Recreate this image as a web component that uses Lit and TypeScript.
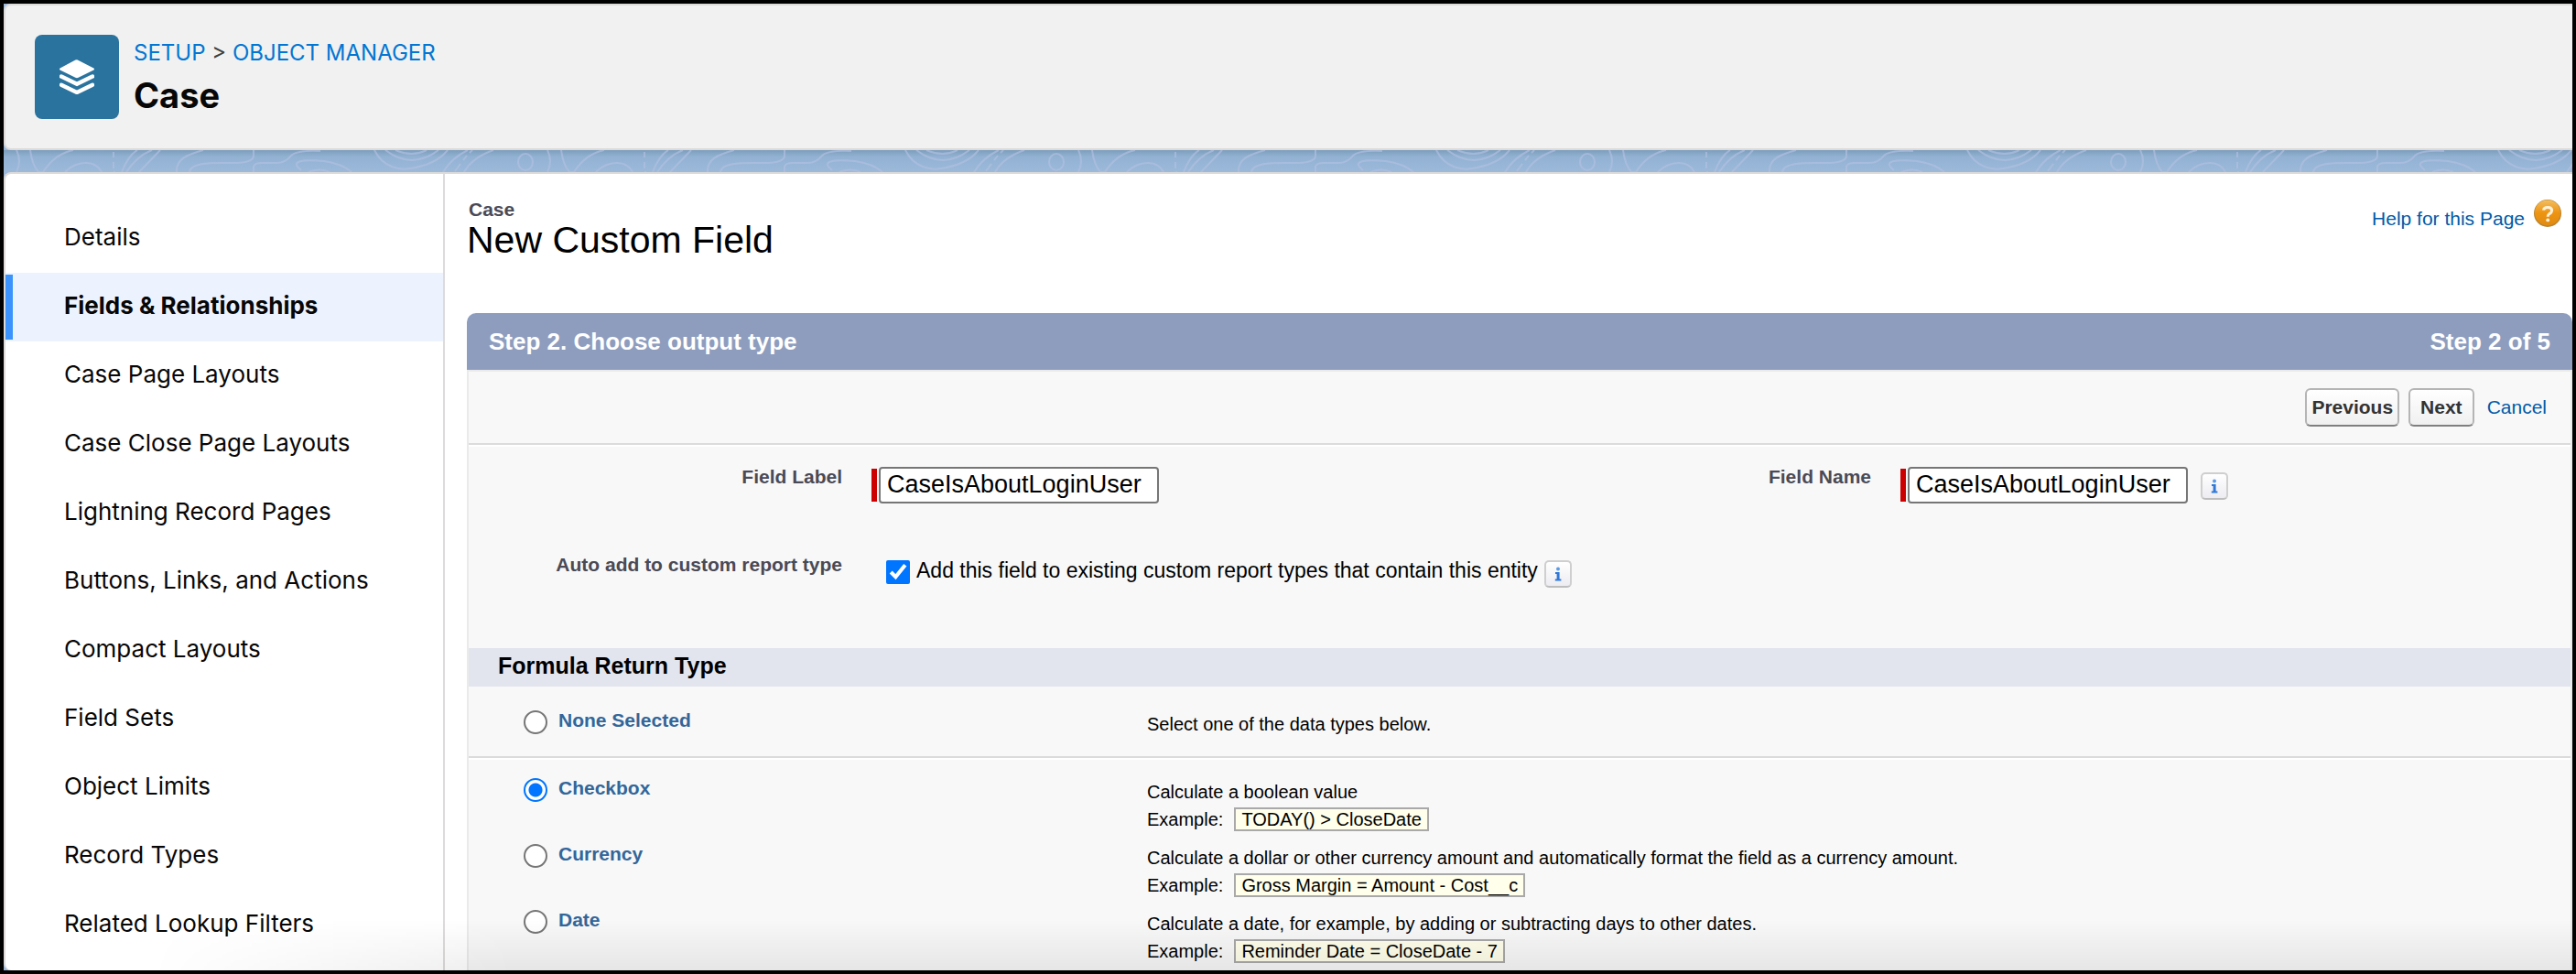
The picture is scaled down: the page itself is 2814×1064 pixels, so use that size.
import { LitElement, html, css, svg, nothing } from "lit";
import { customElement, property, state } from "lit/decorators.js";
import { classMap } from "lit/directives/class-map.js";

const SECTIONS = [
  "Details",
  "Fields & Relationships",
  "Case Page Layouts",
  "Case Close Page Layouts",
  "Lightning Record Pages",
  "Buttons, Links, and Actions",
  "Compact Layouts",
  "Field Sets",
  "Object Limits",
  "Record Types",
  "Related Lookup Filters",
];

interface ReturnType {
  id: string;
  label: string;
  text: string;
  example?: string;
}

const NONE: ReturnType = { id: "none", label: "None Selected", text: "Select one of the data types below." };

const TYPES: ReturnType[] = [
  { id: "checkbox", label: "Checkbox", text: "Calculate a boolean value", example: "TODAY() > CloseDate" },
  {
    id: "currency",
    label: "Currency",
    text: "Calculate a dollar or other currency amount and automatically format the field as a currency amount.",
    example: "Gross Margin = Amount - Cost__c",
  },
  {
    id: "date",
    label: "Date",
    text: "Calculate a date, for example, by adding or subtracting days to other dates.",
    example: "Reminder Date = CloseDate - 7",
  },
];

const layersIcon = svg`
  <path d="M19.8 .4 L37.4 9.4 Q38.6 10.4 37.4 11.4 L20.6 19.8 Q19 20.5 17.4 19.8 L.6 11.4 Q-.6 10.4 .6 9.4 L17.4 .6 Q19 -.2 19.8 .4 Z" fill="#fff"/>
  <path d="M2 19.5 L19 27.8 L36 19.5 M2 28.7 L19 37 L36 28.7" transform="translate(0 -1)" fill="none" stroke="#fff" stroke-width="4.4" stroke-linecap="round"/>`;

/* Contour-line texture shown between the header and the page body. */
@customElement("contour-strip")
export class ContourStrip extends LitElement {
  static styles = css`
    :host {
      display: block;
      height: 24px;
      background: linear-gradient(#7d9dbd, #93b2d3 30%, #9cb9da);
    }
    .lines {
      display: block;
      width: 100%;
      height: 100%;
    }
  `;

  render() {
    return html`<svg class="lines" aria-hidden="true">
      <defs>
        <pattern id="contours" width="580" height="24" patternUnits="userSpaceOnUse">
          <g fill="none" stroke="#b3c0e2" stroke-width="2" stroke-opacity=".65">
            <path d="M14 0 Q20 12 14 24" />
            <path d="M29 0 Q31 16 38 24 H43 Q56 4 76 0" />
            <path d="M67 24 Q77 14 90 14 Q102 14 107 24" />
            <path d="M120 2 V8 M120 13 V20 M121 23 V24" />
            <path d="M129 24 Q136 6 146 0 M134 24 Q146 6 162 0 M148 24 L171 0" />
            <path d="M189 24 C188 10 200 5 218 0" />
            <path d="M203 24 C204 14 225 14 240 14 L256 14 Q273 13 273 6 V0" />
            <path d="M273 24 V18 Q274 14 282 14 L298 14 Q308 14 314 6 Q320 0 346 1" />
            <path d="M325 22 C312 12 325 10 350 12 Q370 15 380 24 M333 24 Q345 19 356 24" />
            <path d="M405 0 C415 20 434 22 444 20 Q472 16 485 0" />
            <path d="M417 0 Q446 22 475 0 M428 0 Q446 8 462 0" />
            <path d="M480 24 Q490 8 507 0 M503 24 Q512 8 535 0" />
            <path d="M493 23 L499 15 M502 11 L506 6 M509 3 L512 0" />
            <ellipse cx="570" cy="13" rx="8" ry="9" />
          </g>
        </pattern>
      </defs>
      <rect width="100%" height="100%" fill="url(#contours)" />
    </svg>`;
  }
}

@customElement("info-button")
export class InfoButton extends LitElement {
  static styles = css`
    :host {
      display: block;
      flex: none;
    }
    .info {
      display: flex;
      align-items: center;
      justify-content: center;
      box-sizing: border-box;
      width: 30px;
      height: 30px;
      padding: 0;
      border: 2px solid #cfcfcf;
      border-bottom-color: #bdbdbd;
      border-radius: 5px;
      background: linear-gradient(#ffffff, #ececf2);
    }
    .glyph {
      display: block;
      width: 8px;
      height: 16px;
    }
  `;

  @property() label = "";

  render() {
    return html`<button class="info" type="button" aria-label=${this.label}>
      <svg class="glyph" viewBox="0 0 8 16" aria-hidden="true">
        <circle cx="4" cy="2.4" r="2" fill="#5b9be6" />
        <path d="M1 6 H5.6 V13.6 H7.4 V15.6 H.8 V13.6 H2.6 V8 H1 Z" fill="#2f78d8" />
      </svg>
    </button>`;
  }
}

@customElement("app-root")
export class AppRoot extends LitElement {
  static styles = css`
    :host {
      display: flex;
      flex-direction: column;
      box-sizing: border-box;
      min-height: 100vh;
      position: relative;
      border: 4px solid #000;
      background: #9cb9da;
      color: #000;
      font: 21px/22px "Liberation Sans", Arial, Helvetica, sans-serif;
    }
    * {
      box-sizing: border-box;
    }
    a {
      color: #015ba7;
      text-decoration: none;
    }
    h1,
    h2,
    h3,
    p,
    ul {
      margin: 0;
      padding: 0;
    }
    button,
    input {
      font-family: inherit;
    }

    .header {
      display: flex;
      gap: 16px;
      padding: 32px;
      border: 2px solid #dddbda;
      border-right: 0;
      border-radius: 8px 0 0 8px;
      background: #f1f1f1;
      font-family: Inter, "Liberation Sans", sans-serif;
    }
    .object-icon {
      display: flex;
      align-items: center;
      justify-content: center;
      width: 92px;
      height: 92px;
      border-radius: 8px;
      background: #2a739e;
    }
    .object-icon svg {
      width: 38px;
      height: 38px;
    }
    .heading {
      display: flex;
      flex-direction: column;
      gap: 2px;
    }
    .crumbs {
      font-size: 24px;
      line-height: 40px;
      color: #3e3e3c;
    }
    .crumbs a {
      color: #0176d3;
    }
    .object-name {
      font-size: 38px;
      line-height: 48px;
      font-weight: 700;
      color: #080707;
    }

    .body {
      display: flex;
      flex: 1;
      border: 2px solid #dddbda;
      border-right: 0;
      border-bottom: 0;
      border-radius: 8px 0 0 8px;
      background: #fff;
    }
    .sidebar {
      flex: none;
      width: 480px;
      padding-top: 33px;
      border-right: 2px solid #dddbda;
      font-family: Inter, "Liberation Sans", sans-serif;
    }
    .sections {
      list-style: none;
    }
    .section {
      display: block;
      padding: 0 0 3px 64px;
      font-size: 26px;
      line-height: 72px;
      color: #080707;
    }
    .section.current {
      font-weight: 700;
      background: linear-gradient(#3b93fb, #3b93fb) 0 50% / 8px calc(100% - 4px) no-repeat #ecf3ff;
    }

    .content {
      flex: 1;
      min-width: 0;
      padding: 28px 0 0 24px;
    }
    .title-row {
      display: flex;
      justify-content: space-between;
      align-items: flex-start;
      padding-right: 12px;
      margin-bottom: 58px;
    }
    .object-type {
      padding-left: 2px;
      font-weight: 700;
      color: #4a4a56;
    }
    .page-title {
      font-size: 41px;
      line-height: 44px;
      font-weight: 400;
    }
    .help {
      display: flex;
      gap: 10px;
      line-height: 42px;
    }
    .help svg {
      width: 30px;
      height: 30px;
    }

    .step-bar {
      display: flex;
      justify-content: space-between;
      padding: 0 24px;
      border-radius: 10px 10px 0 0;
      background: #8e9dbe;
      color: #fff;
      font-size: 26px;
      line-height: 62px;
      font-weight: 700;
    }
    .step-title {
      font: inherit;
    }
    .panel {
      border: 2px solid #eaeaea;
      border-bottom: 0;
      background: #f8f8f8;
    }
    .ruled {
      border-bottom: 2px solid #dbdbdb;
      box-shadow: 0 2px #fff;
    }
    .actions {
      display: flex;
      justify-content: flex-end;
      align-items: center;
      gap: 10px;
      padding: 18px 26px;
    }
    .action {
      height: 42px;
      padding: 0 5px;
      border: 2px solid #b5b5b5;
      border-bottom-color: #7f7f7f;
      border-radius: 6px;
      background: linear-gradient(#ffffff, #f0f0f0);
      color: #333;
      font-size: 21px;
      font-weight: 700;
    }
    .action.wide {
      padding: 0 11px;
    }
    .cancel {
      padding-left: 4px;
    }

    .fields {
      display: grid;
      grid-template-columns: 102fr 163fr 102fr 183fr;
      gap: 56px 32px;
      padding: 24px 0 66px;
    }
    .field-label {
      text-align: right;
      font-weight: 700;
      color: #4a4a56;
    }
    .value {
      display: flex;
      align-items: flex-start;
      gap: 2px;
    }
    .required {
      width: 6px;
      height: 36px;
      margin-top: 2px;
      background: #c00;
    }
    .text-input {
      width: 306px;
      height: 40px;
      padding: 0 7px 2px;
      border: 2px solid #767676;
      border-radius: 4px;
      background: #fff;
      color: #000;
      font-size: 27px;
    }
    .value info-button {
      margin: 6px 0 0 12px;
    }
    .check-value {
      display: flex;
      align-items: flex-start;
      grid-column: 2 / -1;
      gap: 7px;
      padding: 6px 0 0 16px;
      font-size: 23px;
      line-height: 22px;
    }
    .check {
      width: 26px;
      height: 26px;
      margin: 0;
      accent-color: #0075ff;
    }

    .group-title {
      padding: 0 0 4px 32px;
      background: #e2e5ee;
      font-size: 25px;
      line-height: 38px;
      font-weight: 700;
    }
    .none {
      padding: 26px 0 20px;
    }
    .types {
      display: flex;
      flex-direction: column;
      gap: 12px;
      padding: 22px 0 6px;
    }
    .type {
      display: grid;
      grid-template-columns: 741fr 1555fr;
      align-items: start;
    }
    .choice {
      display: flex;
      align-items: flex-start;
      gap: 12px;
      padding-left: 60px;
      font-weight: 700;
      color: #336699;
    }
    .radio {
      appearance: none;
      width: 26px;
      height: 26px;
      margin: 0;
      border: 2px solid #767676;
      border-radius: 50%;
      background: #fff;
    }
    .radio:checked {
      border-color: #0075ff;
      background: radial-gradient(circle, #0075ff 7px, #fff 8px);
    }
    .description {
      font-size: 20px;
      line-height: 30px;
    }
    .example {
      display: flex;
      align-items: center;
      gap: 12px;
    }
    .formula {
      padding: 0 6px;
      border: 2px solid #a9a9a9;
      background: #ffffeb;
      line-height: 22px;
    }
    .bottom-shade {
      position: absolute;
      left: 0;
      right: 0;
      bottom: 0;
      height: 56px;
      background: linear-gradient(transparent, rgba(0, 0, 0, 0.07));
      mask-image: linear-gradient(90deg, transparent 160px, #000 560px);
      pointer-events: none;
    }
  `;

  @state() private selected = "checkbox";

  private renderType(type: ReturnType) {
    return html`<div class="type">
      <label class="choice">
        <input
          class="radio"
          type="radio"
          name="return-type"
          .checked=${this.selected === type.id}
          @change=${() => (this.selected = type.id)}
        />
        ${type.label}
      </label>
      <div class="description">
        <p>${type.text}</p>
        ${type.example
          ? html`<p class="example">Example: <span class="formula">${type.example}</span></p>`
          : nothing}
      </div>
    </div>`;
  }

  render() {
    return html`
      <header class="header">
        <div class="object-icon"><svg viewBox="0 0 38 38" aria-hidden="true">${layersIcon}</svg></div>
        <div class="heading">
          <nav class="crumbs"><a href="#setup">SETUP</a> &gt; <a href="#objects">OBJECT MANAGER</a></nav>
          <h1 class="object-name">Case</h1>
        </div>
      </header>
      <contour-strip></contour-strip>
      <div class="body">
        <nav class="sidebar">
          <ul class="sections">
            ${SECTIONS.map(
              (name, i) => html`<li><a class=${classMap({ section: true, current: i === 1 })} href="#section">${name}</a></li>`
            )}
          </ul>
        </nav>
        <main class="content">
          <div class="title-row">
            <div>
              <p class="object-type">Case</p>
              <h2 class="page-title">New Custom Field</h2>
            </div>
            <a class="help" href="#help">
              Help for this Page
              <svg viewBox="0 0 30 30" aria-hidden="true">
                <defs>
                  <linearGradient id="amber" x2="0" y2="1">
                    <stop offset="0" stop-color="#f2bf62" />
                    <stop offset=".5" stop-color="#ee9412" />
                    <stop offset="1" stop-color="#e08a10" />
                  </linearGradient>
                </defs>
                <circle cx="15" cy="15" r="15" fill="#b9832f" />
                <circle cx="15" cy="14.4" r="14" fill="url(#amber)" />
                <path d="M10.6 11.6 Q10.8 8.4 15 8.4 Q19.6 8.4 19.6 12 Q19.6 14 17 15.6 Q15.2 16.8 15.2 18.8" fill="none" stroke="#fff3dc" stroke-width="3" />
                <circle cx="15.2" cy="22.4" r="1.9" fill="#fff3dc" />
              </svg>
            </a>
          </div>
          <div class="step-bar">
            <h3 class="step-title">Step 2. Choose output type</h3>
            <span>Step 2 of 5</span>
          </div>
          <form class="panel">
            <div class="actions ruled">
              <button class="action" type="button">Previous</button>
              <button class="action wide" type="button">Next</button>
              <a class="cancel" href="#cancel">Cancel</a>
            </div>
            <div class="fields">
              <label class="field-label" for="label">Field Label</label>
              <div class="value">
                <span class="required"></span>
                <input class="text-input" id="label" type="text" value="CaseIsAboutLoginUser" />
              </div>
              <label class="field-label" for="name">Field Name</label>
              <div class="value">
                <span class="required"></span>
                <input class="text-input" id="name" type="text" value="CaseIsAboutLoginUser" />
                <info-button label="Field Name help"></info-button>
              </div>
              <span class="field-label">Auto add to custom report type</span>
              <div class="check-value">
                <input class="check" id="auto-add" type="checkbox" checked />
                <label for="auto-add">Add this field to existing custom report types that contain this entity</label>
                <info-button label="Report type help"></info-button>
              </div>
            </div>
            <h3 class="group-title">Formula Return Type</h3>
            <div class="none ruled">${this.renderType(NONE)}</div>
            <div class="types">${TYPES.map((type) => this.renderType(type))}</div>
          </form>
        </main>
      </div>
      <div class="bottom-shade"></div>
    `;
  }
}
